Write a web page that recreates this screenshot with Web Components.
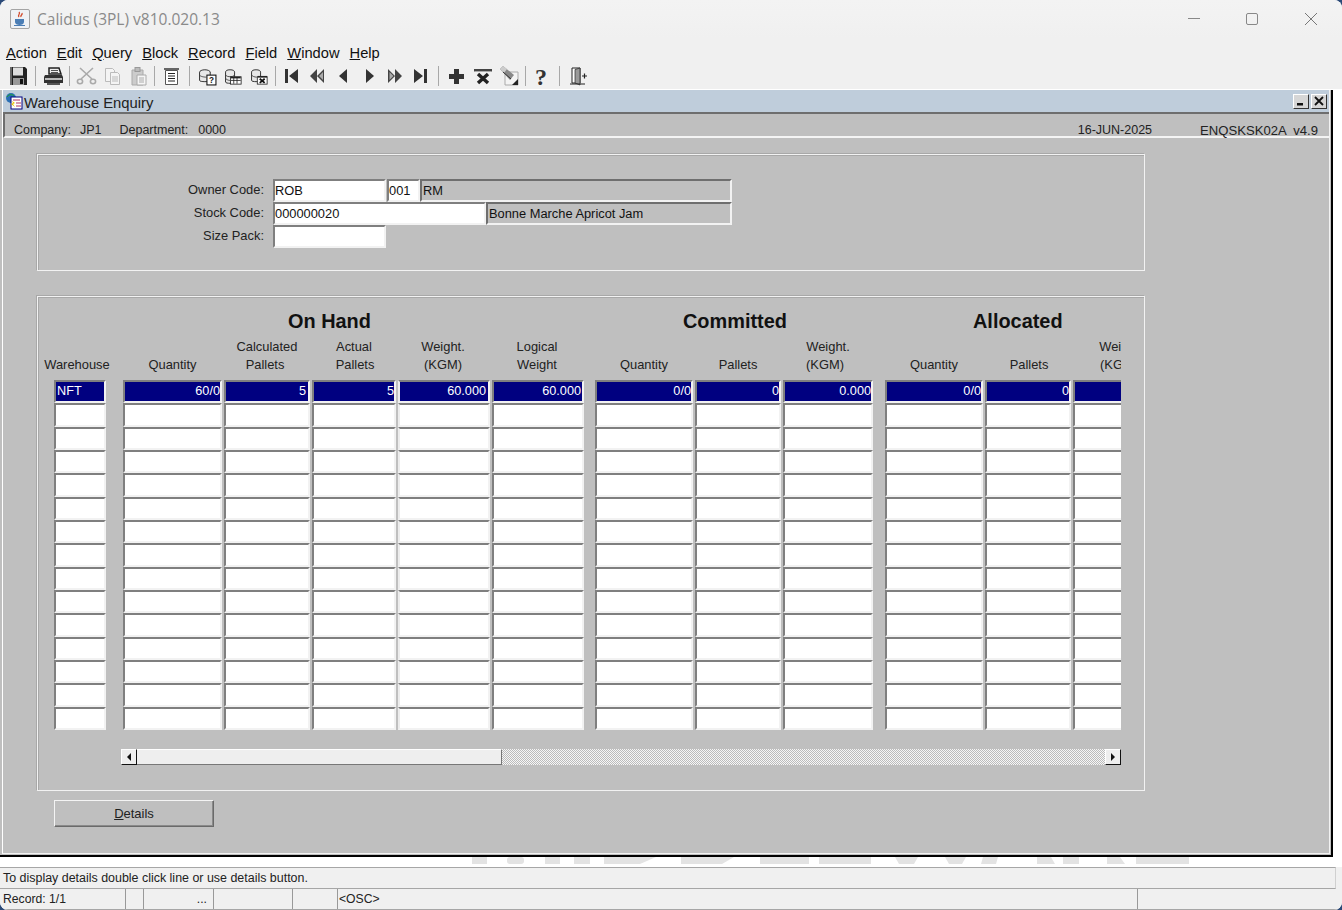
<!DOCTYPE html>
<html><head><meta charset="utf-8"><style>
html,body{margin:0;padding:0;background:#2b4a78;overflow:hidden}
body{width:1342px;height:910px;font-family:"Liberation Sans",Arial,sans-serif}
</style></head><body>
<app-window></app-window>
<script>
const ICONS={
save:'<path d="M4 3h15l2 2v16H4z" fill="#222"/><rect x="7" y="3.500" width="10" height="8" fill="#ddd"/><rect x="7" y="14" width="11" height="7" fill="#999"/><rect x="14" y="15" width="3" height="5" fill="#111"/><path d="M4 3h2v18H4z" fill="#666"/>',
print:'<path d="M8 4h10l2 6H8z" fill="#eee" stroke="#222" stroke-width="1.500"/><path d="M4 11h17l1 2v6H3v-6z" fill="#333"/><rect x="4" y="14" width="17" height="2" fill="#bbb"/><rect x="6" y="19" width="13" height="2" fill="#555"/><path d="M10 6.500h7M10 8.500h7" stroke="#555"/>',
cut:'<g fill="none" stroke="#aaa" stroke-width="1.600"><path d="M6 4l12 11M19 4L7 15"/><ellipse cx="6" cy="17.500" rx="2.600" ry="2.200"/><ellipse cx="19" cy="17.500" rx="2.600" ry="2.200"/></g>',
copy:'<g fill="#f4f4f4" stroke="#bbb"><path d="M5.500 4.500h7l2 2v11h-9z"/><path d="M10.500 8.500h7l2 2v10h-9z"/></g><path d="M12 13h6M12 15h6M12 17h6" stroke="#bbb"/>',
paste:'<path d="M6 6h11v15H6z" fill="#ccc" stroke="#aaa"/><rect x="9" y="3.500" width="5" height="4" fill="#bbb" stroke="#999"/><path d="M11 11h9v10h-9z" fill="#f5f5f5" stroke="#aaa"/><path d="M13 14h5M13 16h5M13 18h5" stroke="#aaa"/>',
list:'<path d="M5 4h15v2H5z" fill="#666"/><path d="M6.500 6.500h12v14h-12z" fill="#fff" stroke="#555"/><path d="M9 9.500h7M9 12h7M9 14.500h7M9 17h7" stroke="#222"/>',
dbq:'<g transform="translate(2.500 2.500) scale(.82)"><g fill="#e8e8e8" stroke="#333" stroke-width="1.200"><ellipse cx="9" cy="7" rx="6.500" ry="3"/><path d="M2.500 7v10c0 2 13 2 13 0V7"/></g><rect x="11.500" y="10.500" width="11" height="12" fill="#fff" stroke="#111" stroke-width="1.300"/><text x="17" y="20.500" font-family="Liberation Sans" font-weight="700" font-size="10" text-anchor="middle" fill="#111">?</text><path d="M3 11c2 2 8 2 8 2" fill="none" stroke="#333"/></g>',
dbt:'<g transform="translate(2.500 2.500) scale(.82)"><g fill="#e8e8e8" stroke="#333" stroke-width="1.200"><ellipse cx="8" cy="7" rx="5.500" ry="3"/><path d="M2.500 7v12c0 2 11 2 11 0V7"/></g><path d="M3 11c2 2 8 2 10 0M3 15c2 2 5 2 5 2" fill="none" stroke="#333"/><rect x="8.500" y="12.500" width="13" height="9" fill="#fff" stroke="#222"/><rect x="9" y="12.500" width="12" height="2" fill="#222"/><path d="M12.500 13v8M16.500 13v8M9 17h12" stroke="#222"/></g>',
dbx:'<g transform="translate(2.500 2.500) scale(.82)"><g fill="#e8e8e8" stroke="#333" stroke-width="1.200"><ellipse cx="8" cy="7" rx="5.500" ry="3"/><path d="M2.500 7v10c0 2 11 2 11 0V7"/></g><path d="M3 11c2 2 6 2 6 2" fill="none" stroke="#333"/><rect x="9.500" y="12.500" width="12" height="9" fill="#fff" stroke="#222"/><rect x="10" y="11.500" width="11.500" height="2" fill="#222"/><path d="M12.500 15l6 5M18.500 15l-6 5" stroke="#111" stroke-width="2.200"/></g>',
first:'<path d="M6 5h3v14H6zM19 5v14l-9-7z" fill="#333"/>',
prev2:'<path d="M12 5v14l-7-7zM19 5v14l-7-7z" fill="#444"/><path d="M18 8v8l-4-4z" fill="#aaa"/>',
prev:'<path d="M16 5v14l-8-7z" fill="#333"/>',
next:'<path d="M9 5v14l8-7z" fill="#333"/>',
next2:'<path d="M5 5v14l7-7zM12 5v14l7-7z" fill="#444"/><path d="M6.500 8v8l4-4z" fill="#aaa"/>',
last:'<path d="M5 5v14l9-7zM15 5h3v14h-3z" fill="#333"/>',
plus:'<path d="M10 5h5v5h5v5h-5v5h-5v-5H5v-5h5z" fill="#333"/>',
del:'<rect x="3" y="5" width="18" height="2.500" fill="#444"/><path d="M4 7.500h16" stroke="#aaa"/><path d="M7 10l10 9M17 10L7 19" stroke="#222" stroke-width="3.400"/>',
erase:'<path d="M8 8h13v13H8z" fill="#f4f4f4" stroke="#aaa"/><path d="M15 21h6v-6z" fill="#222"/><path d="M3 5l3-3 11 9-4 5z" fill="#888"/><path d="M3 5l3-3 4 3-3 4z" fill="#ccc"/><path d="M6 8l8 7" stroke="#333"/>',
help:'<text x="12" y="20.500" font-family="Liberation Serif" font-weight="700" font-size="24" text-anchor="middle" fill="#333">?</text>',
exit:'<path d="M6 4h8v15H6z" fill="#fff" stroke="#222"/><path d="M9 5.500l5-1.500v17l-5-2z" fill="#999" stroke="#222" stroke-width=".7"/><path d="M4 20h15" stroke="#222"/><path d="M16 12h5M18.500 9.500v5" stroke="#222" stroke-width="1.200"/>'
};
function el(name,html){customElements.define(name,class extends HTMLElement{constructor(){super();this.attachShadow({mode:'open'}).innerHTML=typeof html==='function'?html(this):html;}});}

el('tool-icon',`<style>:host{display:flex;align-items:center;justify-content:center;width:26px;height:24px;flex:none}svg{width:24px;height:24px;display:block}</style><svg viewBox="0 0 24 24"></svg>`);
el('tool-sep',`<style>:host{display:flex;justify-content:center;flex:none;height:24px;align-items:center}i{display:block;width:1px;height:20px;background:#a8a8a8}</style><i></i>`);

el('title-bar',`<style>:host{display:flex;align-items:center;height:38px;flex:none;background:linear-gradient(#f3f3f3,#f0f0f0);color:#8a8a8a;font:15.5px "Open Sans","Liberation Sans",sans-serif}
.ic{width:20px;height:20px;margin:0 7px 0 10px;border:1px solid #a4a4a4;background:#eef1f5;border-radius:2px;box-sizing:border-box;display:flex}
.ctl{margin-left:auto;display:flex;align-items:center;padding-right:2px}.ctl svg{display:block;width:59px;height:38px}</style>
<div class="ic"><svg viewBox="0 0 18 18" width="18" height="18"><path d="M8 2c2 2-2 3 0 5M11 3c1 2-2 2-1 4" stroke="#d0492a" fill="none" stroke-width="1.300"/><path d="M4 9h9v3c0 2-2 3-4.500 3S4 14 4 12z" fill="#4a7db5"/><path d="M3 15.500h11" stroke="#4a7db5"/></svg></div>
<span style="margin-top:-1px">Calidus (3PL) v810.020.13</span>
<div class="ctl"><svg viewBox="0 0 59 38"><path d="M25 18.500h12" stroke="#888"/></svg><svg viewBox="0 0 59 38"><rect x="24.500" y="13.500" width="11" height="11" rx="1.500" fill="none" stroke="#888"/></svg><svg viewBox="0 0 59 38"><path d="M24 13l12 12M36 13L24 25" stroke="#777"/></svg></div>`);

el('menu-bar',`<style>:host{display:flex;height:26px;align-items:flex-end;flex:none;background:#f0f0f0;padding-left:6px;font-size:14.7px;color:#111;gap:10px;line-height:20px;box-sizing:border-box;padding-bottom:1px}u{text-underline-offset:1px}</style>
<span><u>A</u>ction</span><span><u>E</u>dit</span><span><u>Q</u>uery</span><span><u>B</u>lock</span><span><u>R</u>ecord</span><span><u>F</u>ield</span><span><u>W</u>indow</span><span><u>H</u>elp</span>`);

el('tool-bar',`<style>:host{display:flex;height:25px;flex:none;background:#f0f0f0;padding-left:5px;box-sizing:border-box;align-items:flex-start}</style><slot></slot>`);

el('win-btn',`<style>:host{display:flex;width:16px;height:15px;box-sizing:border-box;background:#d6d6d6;border:1px solid;border-color:#fff #333 #333 #fff;align-items:center;justify-content:center}</style><slot></slot>`);

el('form-window',`<style>:host{display:flex;flex-direction:column;flex:1;min-height:0;background:#bfbfbf;margin:0 0 0 2px;border-left:1px solid #fff;border-right:1px solid #f2f2f2;border-bottom:1px solid #f2f2f2}
.cap{display:flex;align-items:center;background:#bfcddb;font-size:14.8px;color:#222;flex:none;border-bottom:2px solid #6e6e6e;box-sizing:border-box;padding-right:2px;height:24px}
.cap span{padding-top:3px}
.cap svg.i{margin:0 1px 0 2px;flex:none}
.cap .b{margin-left:auto;display:flex;gap:2px}
.hdr{display:flex;height:24px;flex:none;align-items:center;font-size:12.5px;color:#222;padding:10px 11px 0 9px;box-sizing:border-box;border-bottom:2px solid #f4f4f4;border-left:2px solid #6e6e6e;background:#bfbfbf}
.hdr span{white-space:pre}.sp{margin-left:auto}
.body{flex:1;min-height:0;padding:16px 0 0 34px}</style>
<div class="cap"><svg class="i" width="18" height="18" viewBox="0 0 18 18"><circle cx="6" cy="6" r="5" fill="#2a6fb5"/><path d="M2 5c2-3 5-3 7-1" fill="none" stroke="#2a2"/><rect x="6" y="5" width="11" height="12" fill="#fff" stroke="#000080"/><path d="M8 8h7M11 11h5M11 14h5" stroke="#b03060"/><path d="M7 9l3 2-2 1 2 3-4-3 2-1z" fill="#e8c000"/></svg><span>Warehouse Enquiry</span>
<div class="b"><win-btn><svg width="10" height="10" viewBox="0 0 10 10"><rect x="1" y="7" width="6" height="2.500" fill="#111"/></svg></win-btn><win-btn><svg width="10" height="10" viewBox="0 0 10 10"><path d="M1 1l8 8M9 1l-8 8" stroke="#111" stroke-width="1.800"/></svg></win-btn></div></div>
<div class="hdr"><span style="word-spacing:1px">Company:  JP1</span><span style="margin-left:18px;word-spacing:1.500px">Department:  0000</span><span class="sp">16-JUN-2025</span><span style="margin-left:48px;font-size:13.1px">ENQSKSK02A  v4.9</span></div>
<div class="body"><slot></slot></div>`);

el('erp-panel',`<style>:host{display:block;width:1108px;box-sizing:border-box;border:1px solid #f2f2f2;box-shadow:inset 1px 1px 0 #a8a8a8,-1px -1px 0 #a8a8a8}</style><slot></slot>`);

el('erp-field',`<style>:host{display:flex;align-items:center;box-sizing:border-box;height:23px;width:var(--w);flex:none;padding:0 2px 1px 0;border:2px solid;border-color:#7f7f7f #f2f2f2 #f2f2f2 #7f7f7f;background:#fff;font-size:12.85px;color:#111;overflow:hidden;white-space:nowrap}
:host([ro]){background:#bfbfbf;border-color:#6e6e6e #f2f2f2 #f2f2f2 #6e6e6e;padding-left:1px}</style><slot></slot>`);

el('field-row',`<style>:host{display:flex;align-items:center;height:23px}.l{width:226px;text-align:right;margin-right:9px;font-size:12.9px;color:#222;margin-top:-3px}</style><div class="l"><slot name="label"></slot></div><slot></slot>`);

el('owner-form',`<style>:host{display:block;padding:24px 0 22px 0}</style><slot></slot>`);

const cols=[52,99,86,84,92,92,98,86,90,98,86,92];
const gaps=[17,2,2,2,2,11,2,2,12,2,2];
let tpl='';cols.forEach((c,i)=>{tpl+=c+'px ';if(i<gaps.length)tpl+=gaps[i]+'px ';});
const heads=[[['Warehouse',-3]],[['Quantity',0]],[['Calculated',0],['Pallets',-2]],[['Actual',0],['Pallets',1]],[['Weight.',-1],['(KGM)',-1]],[['Logical',-1],['Weight',-1]],[['Quantity',0]],[['Pallets',0]],[['Weight.',0],['(KGM)',-3]],[['Quantity',0]],[['Pallets',1]],[['Weight.',2],['(KGM)',0]]];
const r1=['NFT','60/0','5','5','60.000','60.000','0/0','0','0.000','0/0','0',''];
const pr=[1,0,2,0,2,1,0,0,0,0,0,1];
const shift=d=>d>0?`margin-left:${d*2}px`:d<0?`margin-right:${-d*2}px`:'';
el('data-grid',()=>{
 let h='';
 heads.forEach((t,i)=>{h+=`<div class="h" style="grid-column:${i*2+1};grid-row:2">${t.map(x=>`<div style="${shift(x[1])}">${x[0]}</div>`).join('')}</div>`});
 let c='';
 for(let r=0;r<15;r++)cols.forEach((w,i)=>{
  const sel=r==0;
  c+=`<div class="c ${sel?'s':''} ${i==0?'lft':''} ${i==4?'soft':''}" style="grid-column:${i*2+1};grid-row:${r+3};padding-right:${pr[i]}px">${sel?r1[i]:''}</div>`;
 });
 return `<style>:host{display:block;width:1083px;overflow:hidden;padding-left:0}
 .g{display:grid;grid-template-columns:${tpl};grid-template-rows:36px 47px repeat(15,23.33px);width:1200px;margin-left:16px;font-size:12.9px;color:#222}
 .t{grid-row:1;font-weight:700;font-size:19.9px;color:#111;align-self:end;line-height:23px;white-space:nowrap}
 .h{align-self:end;text-align:center;line-height:18px;white-space:nowrap;padding-bottom:6px;margin:0 -12px}
 .c{box-sizing:border-box;border:2px solid;border-color:#7f7f7f #f2f2f2 #f2f2f2 #7f7f7f;background:#fff;text-align:right;padding:0 1px 0 2px;line-height:19px;overflow:hidden;white-space:nowrap;font-size:12.7px}
 .soft{border-left-color:#ececec}
 .lft{text-align:left;padding-left:1px}.s{background:#000080;color:#fff}
 </style><div class="g">
 <div class="t" style="grid-column:3/16;margin-left:165px">On Hand</div>
 <div class="t" style="grid-column:13/22;margin-left:88px">Committed</div>
 <div class="t" style="grid-column:19/24;margin-left:88px">Allocated</div>
 ${h}${c}</div>`;
});

el('h-scroll',`<style>:host{display:flex;width:1000px;height:16px}
.b{width:16px;height:16px;box-sizing:border-box;background:#eee;border:1px solid;border-color:#fff #111 #111 #fff;display:flex;align-items:center;justify-content:center;flex:none}
.th{width:365px;background:#eee;box-sizing:border-box;border-right:1px solid #777;border-bottom:1px solid #777;border-top:1px solid #fff;flex:none}
.tr{flex:1;background:repeating-conic-gradient(#bbb 0 25%,#f6f6f6 0 50%) 0 0/2px 2px}</style>
<div class="b"><svg width="6" height="8" viewBox="0 0 6 8"><path d="M5 0v8L1 4z" fill="#111"/></svg></div><div class="th"></div><div class="tr"></div><div class="b"><svg width="6" height="8" viewBox="0 0 6 8"><path d="M1 0v8l4-4z" fill="#111"/></svg></div>`);

el('push-btn',`<style>:host{display:flex;align-items:center;justify-content:center;width:160px;height:27px;box-sizing:border-box;background:#bfbfbf;border:1px solid;border-color:#f4f4f4 #6a6a6a #6a6a6a #f4f4f4;box-shadow:inset -1px -1px 0 #8a8a8a;font-size:13px;color:#222}</style><slot></slot>`);

el('status-bars',`<style>:host{display:flex;flex-direction:column;flex:none;background:#f0f0f0;font-size:12.45px;color:#222}
.msg{height:22px;display:flex;align-items:center;padding-left:3px;border-top:1px solid #a6a6a6;border-bottom:1px solid #a6a6a6;box-sizing:border-box;border-right:1px solid #d0d0d0;margin-right:6px}
.st{display:flex;height:21px;align-items:center;border-bottom:1px solid #a6a6a6;box-sizing:border-box;font-size:12.2px}
.st div{box-sizing:border-box;height:100%;display:flex;align-items:center;border-right:1px solid #999;flex:none;padding-left:3px}</style>
<div class="msg">To display details double click line or use details button.</div>
<div class="st"><div style="width:126px">Record: 1/1</div><div style="width:18px"></div><div style="width:70px;justify-content:flex-end;padding-right:6px">...</div><div style="width:79px"></div><div style="width:45px"></div><div style="width:800px;padding-left:1px">&lt;OSC&gt;</div></div>`);

el('app-window',`<style>:host{display:flex;flex-direction:column;width:1342px;height:910px;background:#fff;border-radius:8px;overflow:hidden}
.mdi{display:flex;flex-direction:column;width:1333px;height:767px;flex:none;box-sizing:border-box;background:#bfbfbf;border-right:2px solid #000;border-bottom:2px solid #000;padding:0 1px 1px 0}
.ghost{height:10px;flex:none;display:block;width:100%}
.p2{margin-top:25px}.dbtn{margin:9px 0 0 17px}
.sb{padding:19px 0 25px 83px;display:block}
</style>
<title-bar></title-bar><menu-bar></menu-bar>
<tool-bar id="tb"></tool-bar>
<div style="height:1px;background:#fff;flex:none"></div>
<div class="mdi"><form-window>
 <erp-panel><owner-form>
  <field-row><span slot="label">Owner Code:</span><erp-field style="--w:113px">ROB</erp-field><erp-field style="--w:33px;margin-left:1px">001</erp-field><erp-field ro style="--w:312px">RM</erp-field></field-row>
  <field-row><span slot="label">Stock Code:</span><erp-field style="--w:213px">000000020</erp-field><erp-field ro style="--w:246px">Bonne Marche Apricot Jam</erp-field></field-row>
  <field-row><span slot="label">Size Pack:</span><erp-field style="--w:113px"></erp-field></field-row>
 </owner-form></erp-panel>
 <erp-panel class="p2"><data-grid></data-grid><div class="sb"><h-scroll></h-scroll></div></erp-panel>
 <push-btn class="dbtn"><span><u>D</u>etails</span></push-btn>
</form-window></div>
<svg class="ghost" viewBox="0 0 1342 10"><g fill="#e3e3e3"><rect x="472" y="0" width="15" height="7"/><rect x="507" y="0" width="17" height="7" rx="3"/><rect x="545" y="0" width="15" height="7"/><rect x="574" y="0" width="16" height="7"/><path d="M604 0h52l-16 7h-36z"/><path d="M681 0h53l-12 7h-41z"/><rect x="760" y="0" width="49" height="7"/><rect x="819" y="0" width="52" height="7"/><path d="M895 0h23l-4 7h-15z"/><path d="M945 0h21l-4 7h-13z"/><path d="M983 0h15l-2 7h-15z"/><path d="M1037 0h14l4 7h-18z"/><rect x="1063" y="0" width="16" height="7"/><path d="M1107 0h13l5 7h-18z"/><rect x="1136" y="0" width="53" height="7"/></g></svg>
<status-bars></status-bars>`);

// toolbar content: names with icon width overrides, numbers are separators
const seq=[['save'],[9],['print'],[7],['cut','copy','paste'],[7],['list'],[10],['dbq','dbt','dbx'],[6],['first','prev2','prev','next','next2','last'],[8],['plus:27','del:27','erase'],[6],['help'],[11],['exit']];
const tb=document.querySelector('app-window').shadowRoot.getElementById('tb');
seq.forEach(s=>{ if(typeof s[0]==='number'){const e=document.createElement('tool-sep');e.style.width=s[0]+'px';tb.append(e);} else s.forEach(n=>{const [k,w]=n.split(':');const e=document.createElement('tool-icon');if(w)e.style.width=w+'px';e.shadowRoot.querySelector('svg').innerHTML=ICONS[k];tb.append(e);}); });
</script></body></html>
